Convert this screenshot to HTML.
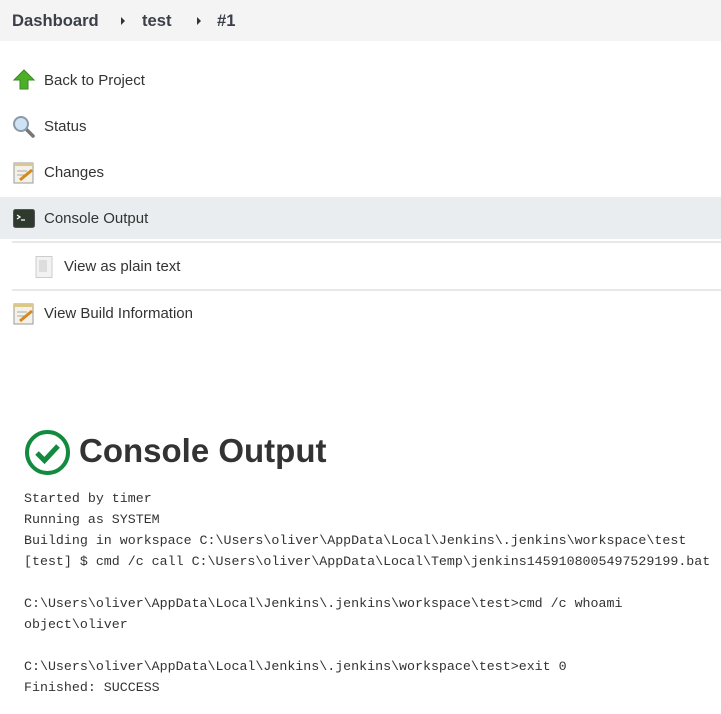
<!DOCTYPE html>
<html><head><style>
*{margin:0;padding:0;box-sizing:border-box}
body{width:721px;height:714px;background:#fff;font-family:"Liberation Sans",sans-serif;color:#333;overflow:hidden;position:relative}
.bc{position:absolute;left:0;top:0;width:721px;height:41px;background:#f4f4f4}
.bc span{position:absolute;top:11px;font-size:16.6px;font-weight:bold;color:#3b4048}
.arr{position:absolute;top:17px;width:0;height:0;border-left:4px solid #333;border-top:4px solid transparent;border-bottom:4px solid transparent}
.item{position:absolute;left:0;font-size:15px;color:#333}
.item .t{position:absolute;left:44px;top:-8px;white-space:nowrap}
.hl{position:absolute;left:0;top:197px;width:721px;height:42px;background:#e9edf0}
.sep{position:absolute;left:12px;width:709px;height:2px;background:#e6e9ec}
pre{position:absolute;left:24px;top:488px;font-family:"Liberation Mono","DejaVu Sans Mono",monospace;font-size:13.3px;line-height:21px;color:#333}
h1{position:absolute;left:79px;top:432px;font-size:33px;font-weight:bold;color:#333;letter-spacing:0px}
</style></head><body>
<div class="bc">
<span style="left:12px">Dashboard</span>
<div class="arr" style="left:121px"></div>
<span style="left:142px">test</span>
<div class="arr" style="left:197px"></div>
<span style="left:217px">#1</span>
</div>
<div class="hl"></div>
<div class="sep" style="top:241px"></div>
<div class="sep" style="top:289px"></div>

<div class="item" style="top:80px">
<svg style="position:absolute;left:13px;top:-11px" width="22" height="22" viewBox="0 0 22 22"><path d="M11 1 L21 11 H15 V20 H7 V11 H1 Z" fill="#4caf2a" stroke="#3a8a1f"/></svg>
<span class="t">Back to Project</span></div>
<div class="item" style="top:126px">
<svg style="position:absolute;left:12px;top:-11px" width="24" height="24" viewBox="0 0 24 24"><line x1="13" y1="13" x2="21" y2="21" stroke="#777" stroke-width="3.5" stroke-linecap="round"/><circle cx="9" cy="9" r="7" fill="#cfe3f5" stroke="#8a9aa8" stroke-width="2"/></svg>
<span class="t">Status</span></div>
<div class="item" style="top:172px">
<svg style="position:absolute;left:12px;top:-11px" width="24" height="24" viewBox="0 0 24 24"><rect x="2" y="2" width="19" height="20" fill="#f4f1e8" stroke="#999"/><rect x="2" y="2" width="19" height="3" fill="#d9c88a"/><line x1="5" y1="10" x2="15" y2="10" stroke="#aaa"/><line x1="5" y1="14" x2="13" y2="14" stroke="#aaa"/><path d="M8 19 L20 9" stroke="#d48a1e" stroke-width="3"/></svg>
<span class="t">Changes</span></div>
<div class="item" style="top:218px">
<svg style="position:absolute;left:12px;top:-11px" width="24" height="24" viewBox="0 0 24 24"><rect x="1.5" y="2.5" width="21" height="18" rx="2" fill="#2d3a2d" stroke="#555"/><path d="M5 8 L8 10 L5 12 M9 13 H13" stroke="#fff" stroke-width="1.3" fill="none"/></svg>
<span class="t">Console Output</span></div>
<div class="item" style="top:266px">
<svg style="position:absolute;left:33px;top:-11px" width="22" height="24" viewBox="0 0 22 24"><rect x="3" y="1.5" width="16" height="21" fill="#f2f2f2" stroke="#ccc"/><rect x="6" y="5" width="8" height="12" fill="#ddd"/></svg>
<span class="t" style="left:64px">View as plain text</span></div>
<div class="item" style="top:313px">
<svg style="position:absolute;left:12px;top:-11px" width="24" height="24" viewBox="0 0 24 24"><rect x="2" y="2" width="19" height="20" fill="#f4f1e8" stroke="#999"/><rect x="2" y="2" width="19" height="3" fill="#d9c88a"/><line x1="5" y1="10" x2="15" y2="10" stroke="#aaa"/><line x1="5" y1="14" x2="13" y2="14" stroke="#aaa"/><path d="M8 19 L20 9" stroke="#d48a1e" stroke-width="3"/></svg>
<span class="t">View Build Information</span></div>

<svg style="position:absolute;left:24px;top:429px" width="47" height="47" viewBox="0 0 47 47"><circle cx="23.5" cy="23.5" r="20.5" fill="none" stroke="#138a3e" stroke-width="4"/><path d="M13 24 L20.5 31.5 L34 17" fill="none" stroke="#138a3e" stroke-width="5"/></svg>
<h1>Console Output</h1>
<pre>Started by timer
Running as SYSTEM
Building in workspace C:\Users\oliver\AppData\Local\Jenkins\.jenkins\workspace\test
[test] $ cmd /c call C:\Users\oliver\AppData\Local\Temp\jenkins1459108005497529199.bat

C:\Users\oliver\AppData\Local\Jenkins\.jenkins\workspace\test>cmd /c whoami
object\oliver

C:\Users\oliver\AppData\Local\Jenkins\.jenkins\workspace\test>exit 0
Finished: SUCCESS</pre>
</body></html>
